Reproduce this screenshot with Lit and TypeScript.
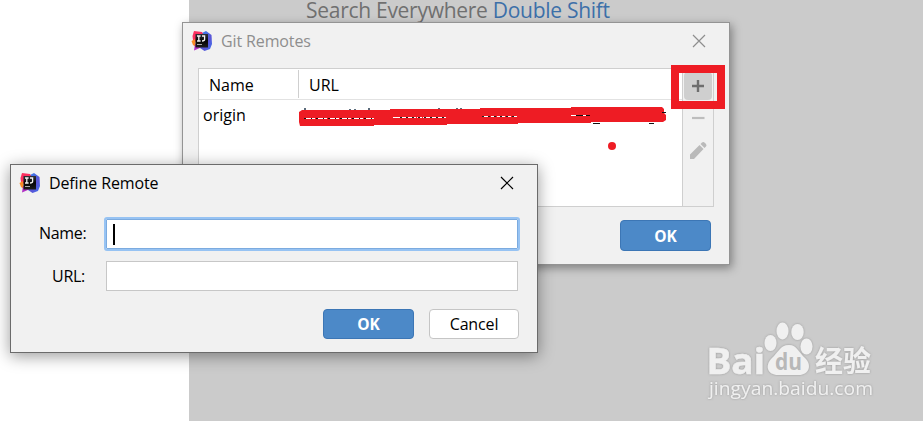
import { LitElement, html, css, svg } from "lit";
import { customElement, property } from "lit/decorators.js";

@customElement("idea-logo")
class IdeaLogo extends LitElement {
  static styles = css`:host { display: block; width: 22px; height: 22px; } svg { display: block; }`;
  render() {
    return html`<svg width="22" height="22" viewBox="0 0 22 22">
      <defs>
        <linearGradient id="b" x1="0" y1="0" x2="1" y2="1"><stop offset="0" stop-color="#2f86f0"/><stop offset=".6" stop-color="#5b54d6"/><stop offset="1" stop-color="#3d74f0"/></linearGradient>
        <linearGradient id="k" x1="0" y1="0" x2="0" y2="1"><stop offset="0" stop-color="#303038"/><stop offset=".5" stop-color="#050505"/><stop offset="1" stop-color="#1c1c1c"/></linearGradient>
      </defs>
      <path d="M11 3 15 1 20.500 5 21 14 19 19 13.500 21 9 18Z" fill="url(#b)"/>
      <path d="M3 1 11 2 13 6 8 14 2 10 1.500 6Z" fill="#fb2f5f"/>
      <path d="M4 9 .5 11 2 15 5 17Z" fill="#fb8a24"/>
      <path d="M4 14 3 20.500 10 17.500Z" fill="#b02fc4"/>
      <rect x="4.500" y="4" width="12.500" height="13.500" fill="url(#k)"/>
      <path d="M6 6h3.600M7.800 6v5M6 11h3.600M11 6h2.600v3.600q0 1.400-2.600 1.400" fill="none" stroke="#f4f4f4" stroke-width="1.300"/>
      <path d="M6 14.500h5" stroke="#aaa" stroke-width="1"/>
    </svg>`;
  }
}

@customElement("dialog-title")
class DialogTitle extends LitElement {
  @property() label = "";
  static styles = css`
    :host { display: flex; align-items: center; height: 36px; flex: none; }
    .label { flex: 1; margin-left: 8px; white-space: nowrap; font-size: 16px; letter-spacing: -.12px; }
    svg { display: block; }
  `;
  render() {
    return html`<idea-logo></idea-logo><span class="label">${this.label}</span>
      <svg width="14" height="14" viewBox="0 0 14 14"><path d="M1 1 13 13M13 1 1 13" stroke="currentColor" stroke-width="1.200"/></svg>`;
  }
}

const strokeRows = svg`
  <path fill="#ee1c24" d="M0 17v-5l3-2h88v-1h90v-1h91v-1h91l2 2v4l2 2v5l-3 2h-72v1h-73v1h-71v1h-73v1H1l-1-4Z"/>
  <path d="M5 18.500H75" stroke="#fff" stroke-dasharray="7 1 3 1"/>
  <path d="M5 18.500H75" stroke="#111" stroke-dasharray="2 5 1 4"/>
  <path d="M94 17.500H147M183 16.500H218" stroke="#fff" stroke-dasharray="8 1 5 1"/>
  <path d="M101 17.500H147M183 16.500H218" stroke="#222" stroke-dasharray="2 4"/>
  <path d="M272 15.500H290" stroke="#fff" stroke-dasharray="5 1"/>
  <path d="M277 15.500H291M294 23.500H301M350 23.500H355M363 12.500H367" stroke="#111" stroke-dasharray="7 3"/>
  <path d="M6 8v2M51 9v1M56 9v1M70 8v2M140 8v1M158 8v1M162 8v1" stroke="#253b50" stroke-width="1.500"/>
`;

@customElement("app-root")
class AppRoot extends LitElement {
  static styles = css`
    :host { display: block; position: relative; width: 923px; height: 421px; overflow: hidden; background: #fff; color: #000; font: 16px/20px "Open Sans", "Noto Sans", sans-serif; }
    * { box-sizing: border-box; }
    svg { display: block; }
    .editor { margin-left: 189px; height: 421px; background: #cbcbcb; padding: 0 0 0 117px; }
    .hint { margin: 0; font-size: 21px; line-height: 20px; color: #707070; white-space: nowrap; letter-spacing: -.28px; }
    .hint b { font-weight: 400; color: #3d70a9; }
    .window { position: absolute; display: flex; flex-direction: column; background: #f1f1f1; }
    .remotes { left: 182px; top: 22px; width: 548px; height: 243px; padding: 0 15px; border: 1px solid #949494; box-shadow: 2px 3px 9px rgba(0,0,0,.38); }
    .remotes dialog-title { color: #8e8e8e; margin: 0 8px 0 -7px; }
    .table { display: flex; width: 516px; height: 139px; margin-top: 9px; border: 1px solid #cfcfcf; background: #fff; }
    .data { flex: 1; }
    .head { display: flex; height: 31px; border-bottom: 1px solid #e2e2e2; align-items: center; }
    .head span { padding-left: 10px; height: 28px; line-height: 31px; }
    .head .name { width: 100px; border-right: 1px solid #cfcfcf; }
    .row { display: flex; }
    .row span { width: 100px; padding: 5px 0 0 4px; line-height: 20px; }
    .scribble { overflow: visible; }
    .tools { width: 31px; background: #f1f1f1; border-left: 1px solid #cfcfcf; display: flex; flex-direction: column; align-items: center; padding-top: 3px; }
    .add { width: 28px; height: 28px; border-radius: 4px; background: #cfcfcf; }
    .mark { position: absolute; left: 671px; top: 65px; width: 54px; height: 44px; border: 8px solid #ee1c24; }
    .dot { position: absolute; left: 608px; top: 142px; width: 8px; height: 8px; border-radius: 4px; background: #ee1c24; }
    .actions { display: flex; justify-content: flex-end; gap: 15px; }
    .remotes .actions { margin: 13px 3px 0 0; }
    .btn { font: 16px/28px "Open Sans", "Noto Sans", sans-serif; letter-spacing: -.15px; width: 91px; height: 31px; padding: 0; text-align: center; border-radius: 4px; border: 1px solid #c5c5c5; background: #fff; color: #000; }
    .primary { font-weight: 700; font-size: 15.500px; color: #fff; background: #4c89c8; border-color: #3c76b5; }
    .define { left: 10px; top: 164px; width: 528px; height: 189px; padding: 0 18px 0 28px; border: 1px solid #6b6b6b; box-shadow: 0 3px 15px rgba(0,0,0,.4); }
    .define dialog-title { margin: 0 5px 0 -20px; }
    .field { display: flex; align-items: center; height: 30px; }
    .field label { width: 46px; margin-right: 21px; text-align: right; white-space: nowrap; letter-spacing: -.3px; }
    .box { flex: none; width: 412px; height: 30px; border: 1px solid #c7c7c7; background: #fff; padding: 4px 0 0 6px; }
    .focus { border-color: #7cabdf; outline: 2px solid #97c3f3; border-radius: 1px; }
    .caret { width: 2px; height: 21px; background: #000; }
    .first { margin-top: 18px; }
    .first label { padding-bottom: 2px; }
    .second { margin-top: 12px; }
    .define .actions { margin-top: 18px; }
    .define .btn { height: 30px; }
    .define .cancel { width: 90px; }
    .watermark { position: absolute; left: 700px; top: 315px; }
  `;
  render() {
    return html`
      <div class="editor"><p class="hint">Search Everywhere <b>Double Shift</b></p></div>
      <section class="window remotes">
        <dialog-title label="Git Remotes"></dialog-title>
        <div class="table">
          <div class="data">
            <div class="head"><span class="name">Name</span><span>URL</span></div>
            <div class="row"><span>origin</span>
              <svg class="scribble" width="370" height="28" viewBox="0 0 370 28">${strokeRows}</svg></div>
          </div>
          <div class="tools">
            <svg class="add" viewBox="0 0 28 28"><path d="M8 14H20M14 8V20" stroke="#6e6e6e" stroke-width="2.400"/></svg>
            <svg width="28" height="32" viewBox="0 0 28 32"><path d="M8 18H20.500" stroke="#bdbdbd" stroke-width="2.200"/></svg>
            <svg width="28" height="32" viewBox="0 0 28 32"><path fill="#bababa" d="M6 27V22.500L15.500 13 19.500 17 10 27ZM16.500 12 18 10.500Q19.500 9.500 21 11L22 12Q23 13.500 22 14.500L20.500 16Z"/></svg>
          </div>
        </div>
        <div class="actions"><button class="btn primary">OK</button></div>
      </section>
      <div class="mark"></div><div class="dot"></div>
      <section class="window define">
        <dialog-title label="Define Remote"></dialog-title>
        <div class="field first"><label>Name:</label><div class="box focus"><div class="caret"></div></div></div>
        <div class="field second"><label>URL:</label><div class="box"></div></div>
        <div class="actions"><button class="btn primary">OK</button><button class="btn cancel">Cancel</button></div>
      </section>
      <svg class="watermark" width="190" height="90" viewBox="0 0 190 90">
        <defs><filter id="edge" x="-10%" y="-10%" width="120%" height="120%"><feDropShadow dx="0" dy="0" stdDeviation=".8" flood-color="#777" flood-opacity=".65"/></filter></defs>
        <g fill="#f0f0f0" filter="url(#edge)" font-family="Open Sans, Noto Sans, sans-serif">
          <text x="6.500" y="58.500" font-size="36" font-weight="700" stroke="#f0f0f0" stroke-width=".5" textLength="58.500" lengthAdjust="spacingAndGlyphs">Bai</text>
          <ellipse cx="70.500" cy="28" rx="6" ry="8"/><ellipse cx="82.500" cy="16" rx="6" ry="8.500"/><ellipse cx="97.500" cy="17" rx="6.200" ry="8"/><ellipse cx="106.500" cy="31.500" rx="6" ry="8"/>
          <path d="M89 30C97 30 99 38 105 43C113 51 108 60 99 60H78C68 60 64 51 72 43C78 38 80 30 89 30Z"/>
          <text x="115" y="57" font-size="29" font-weight="700" font-family="Noto Sans CJK SC, sans-serif" textLength="56" lengthAdjust="spacingAndGlyphs">经验</text>
          <text x="9" y="80" font-size="19" textLength="164" lengthAdjust="spacingAndGlyphs">jingyan.baidu.com</text>
        </g>
        <text x="75" y="55" font-size="24" font-weight="700" fill="#b8b8b8" font-family="Open Sans, sans-serif" textLength="27" lengthAdjust="spacingAndGlyphs">du</text>
      </svg>`;
  }
}
